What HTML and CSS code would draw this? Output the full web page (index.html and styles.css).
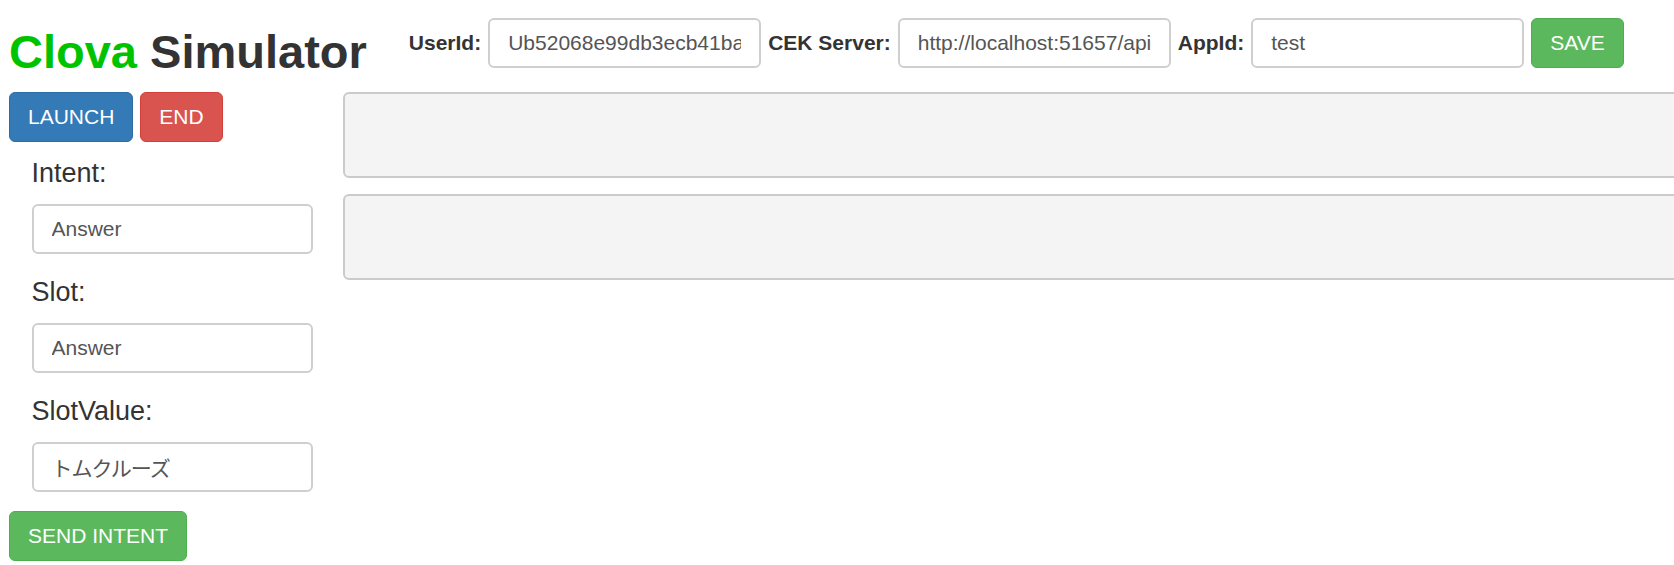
FILE: index.html
```html
<!DOCTYPE html>
<html lang="ja">
<head>
<meta charset="utf-8">
<title>Clova Simulator</title>
<link rel="stylesheet" href="styles.css">
</head>
<body>
<div class="page">
  <header class="topbar">
    <h1 class="title"><span class="brand">Clova</span> Simulator</h1>
    <form class="settings">
      <label class="field-label">UserId:</label>
      <input class="text-input" type="text" value="Ub52068e99db3ecb41ba7f3c2e9d81a40">
      <label class="field-label">CEK Server:</label>
      <input class="text-input" type="text" value="http://localhost:51657/api">
      <label class="field-label">AppId:</label>
      <input class="text-input" type="text" value="test">
      <button class="btn btn-success" type="button">SAVE</button>
    </form>
  </header>
  <main class="workspace">
    <aside class="controls">
      <div class="actions">
        <button class="btn btn-primary" type="button">LAUNCH</button>
        <button class="btn btn-danger" type="button">END</button>
      </div>
      <div class="form-group">
        <label class="group-label">Intent:</label>
        <input class="text-input" type="text" value="Answer">
      </div>
      <div class="form-group">
        <label class="group-label">Slot:</label>
        <input class="text-input" type="text" value="Answer">
      </div>
      <div class="form-group">
        <label class="group-label">SlotValue:</label>
        <input class="text-input jp" type="text" value="トムクルーズ">
      </div>
      <button class="btn btn-success" type="button">SEND INTENT</button>
    </aside>
    <section class="output">
      <pre class="panel"></pre>
      <pre class="panel"></pre>
    </section>
  </main>
</div>
</body>
</html>
```

FILE: styles.css
```css
html, body {
  margin: 0;
  padding: 0;
  overflow: hidden;
  background: #fff;
}

body {
  font-family: "Liberation Sans", Arial, "Noto Sans CJK JP", sans-serif;
  color: #333;
}

.page {
  padding-left: 9px;
}

.topbar {
  display: flex;
  align-items: flex-start;
  height: 77px;
}

.title {
  margin: 27px 0 0;
  font-size: 47px;
  line-height: 50px;
  font-weight: bold;
  color: #333;
  white-space: nowrap;
}

.brand {
  color: #00c300;
}

.settings {
  display: flex;
  align-items: center;
  gap: 7px;
  margin: 18px 0 0 42px;
}

.field-label {
  font-size: 21px;
  font-weight: bold;
  color: #333;
  white-space: nowrap;
}

.text-input {
  box-sizing: border-box;
  height: 50px;
  border: 2px solid #cfcfcf;
  border-radius: 6px;
  padding: 0 18px;
  font-family: "Liberation Sans", Arial, "Noto Sans CJK JP", sans-serif;
  font-size: 21px;
  color: #555;
  background: #fff;
  outline: none;
}

.settings .text-input {
  width: 273px;
}

.jp {
  letter-spacing: -1px;
}

.btn {
  box-sizing: border-box;
  height: 50px;
  padding: 0 18px;
  border: 1px solid;
  border-radius: 6px;
  font-family: "Liberation Sans", Arial, sans-serif;
  font-size: 21px;
  color: #fff;
  white-space: nowrap;
}

.btn-primary {
  background: #337ab7;
  border-color: #2e6da4;
}

.btn-danger {
  background: #d9534f;
  border-color: #d43f3a;
}

.btn-success {
  background: #5cb85c;
  border-color: #4cae4c;
}

.workspace {
  display: flex;
  margin-top: 15px;
}

.controls {
  flex: 0 0 334px;
  display: flex;
  flex-direction: column;
  align-items: flex-start;
}

.actions {
  display: flex;
  gap: 7px;
  margin-bottom: 12px;
}

.form-group {
  display: flex;
  flex-direction: column;
  align-items: flex-start;
  padding-left: 22.5px;
  margin-bottom: 19px;
}

.group-label {
  font-size: 27px;
  line-height: 38px;
  margin-bottom: 12px;
  color: #333;
}

.form-group .text-input {
  width: 281px;
}

.output {
  flex: 0 0 1400px;
  display: flex;
  flex-direction: column;
  gap: 16px;
}

.panel {
  box-sizing: border-box;
  margin: 0;
  height: 86px;
  background: #f4f4f4;
  border: 2px solid #cbcbcb;
  border-radius: 6px;
}
```
